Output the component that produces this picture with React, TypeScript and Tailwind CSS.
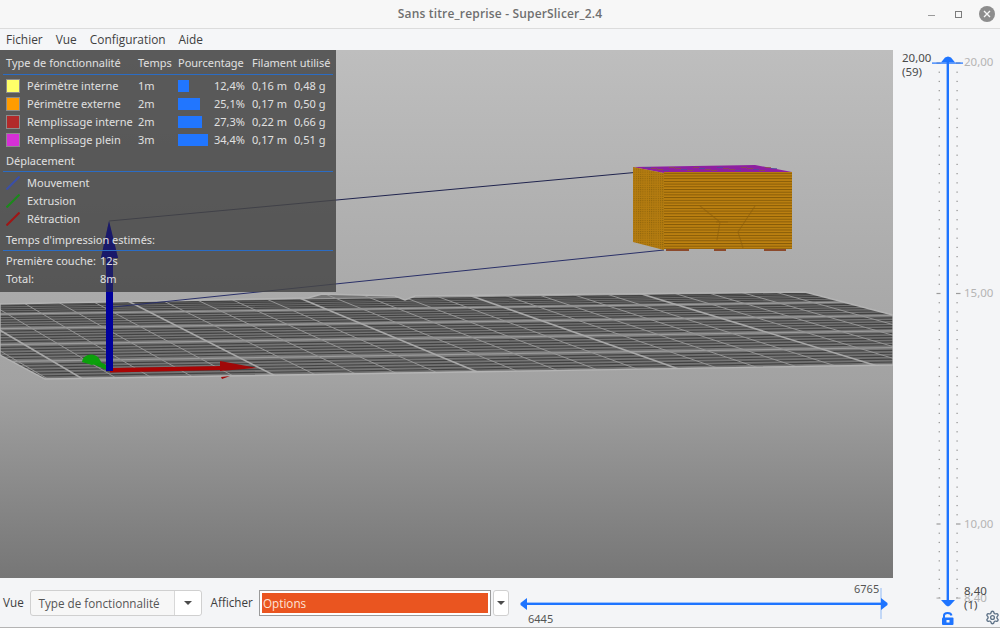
import React from "react";
import { Settings } from "lucide-react";

const features = [
  { color: "bg-[#ffff68]", name: "Périmètre interne", time: "1m", bar: "w-[11px]", pct: "12,4%", len: "0,16 m", weight: "0,48 g" },
  { color: "bg-[#ff9c00]", name: "Périmètre externe", time: "2m", bar: "w-[22px]", pct: "25,1%", len: "0,17 m", weight: "0,50 g" },
  { color: "bg-[#b22a2a]", name: "Remplissage interne", time: "2m", bar: "w-[24px]", pct: "27,3%", len: "0,22 m", weight: "0,66 g" },
  { color: "bg-[#d62fd6]", name: "Remplissage plein", time: "3m", bar: "w-[30px]", pct: "34,4%", len: "0,17 m", weight: "0,51 g" },
];

const moves = [
  { color: "#3a4fa8", name: "Mouvement" },
  { color: "#1a8a1a", name: "Extrusion" },
  { color: "#a01515", name: "Rétraction" },
];

const bedTop = (x: number) => 303 - x * 0.0137;
const bedBottom = (x: number) => 379.7 - x * 0.0165;
const bedOutline = "0,304 308,298 322,294 395,296 405,300 415,296 805,292 893,315 893,365 45,379 0,355";

const BedAndModel = () => {
  const rows = Array.from({ length: 31 }, (_, i) => i);
  const cols = Array.from({ length: 31 }, (_, i) => i);
  const mottles = Array.from({ length: 22 }, (_, i) => i);
  return (
    <svg viewBox="0 50 893 528" className="block w-[893px] h-[528px]">
      <defs>
        <clipPath id="bed">
          <polygon points={bedOutline} />
        </clipPath>
        <pattern id="layers" width="4" height="2.7" patternUnits="userSpaceOnUse">
          <rect width="4" height="2.7" fill="#bd8110" />
          <rect width="4" height="1" fill="#855a08" />
        </pattern>
        <pattern id="side" width="2.2" height="2.2" patternUnits="userSpaceOnUse">
          <rect width="2.2" height="2.2" fill="#b47c10" />
          <rect width="1" height="1" fill="#8e640b" />
        </pattern>
      </defs>

      <g clipPath="url(#bed)">
        <rect x="0" y="285" width="893" height="100" fill="#747474" />
        {rows.map((i) => {
          const v = Math.pow(i / 30, 1.2);
          const y0 = bedTop(0) + (bedBottom(0) - bedTop(0)) * v;
          const y1 = bedTop(893) + (bedBottom(893) - bedTop(893)) * v;
          const major = i % 6 === 0;
          return (
            <line
              key={i}
              x1="0"
              y1={y0}
              x2="893"
              y2={y1}
              stroke={major ? "#9c9c9c" : "#434343"}
              strokeWidth="1.2"
            />
          );
        })}
        {cols.map((i) => {
          const top = -240 + i * 35;
          const dx = 130 + Math.max(top, 0) * 0.19;
          const major = i % 5 === 0;
          return (
            <line
              key={i}
              x1={top}
              y1="292"
              x2={top + dx * 1.15}
              y2="380"
              stroke={major ? "#a8a8a8" : "#949494"}
              strokeWidth={major ? 1.6 : 1}
            />
          );
        })}
      </g>
      <polygon points={bedOutline} fill="none" stroke="#b4b4b4" strokeWidth="1.4" />

      {/* travel moves */}
      <line x1="109" y1="221" x2="640" y2="172" stroke="#20244e" strokeWidth="1" />
      <line x1="113" y1="307" x2="664" y2="250" stroke="#2a3068" strokeWidth="1" />

      {/* printed part */}
      <polygon points="633,167 755,165 792,172 664,173" fill="#8e1fa0" />
      {mottles.map((i) => (
        <line
          key={i}
          x1={645 + i * 6}
          y1={167.5 + (i % 4)}
          x2={651 + i * 6}
          y2={167.5 + (i % 4)}
          stroke={i % 3 === 0 ? "#4a4f9c" : "#8a5440"}
          strokeWidth="1"
          opacity="0.7"
        />
      ))}
      <polygon points="633,167 664,173 664,250 633,242" fill="url(#side)" />
      <rect x="664" y="172" width="128" height="77" fill="url(#layers)" />
      <path d="M700 206 L720 222 L717 240 M755 206 L738 232 L743 248 M716 222 L728 222" stroke="#8a5c0c" strokeWidth="1.2" opacity="0.55" fill="none" />
      <rect x="666" y="249" width="23" height="2" fill="#8c4a2c" />
      <rect x="714" y="249" width="12" height="2" fill="#8c4a2c" />
      <rect x="764" y="249" width="22" height="2" fill="#8c4a2c" />

      {/* axes */}
      <polygon points="109,371 88,362 91,357 110,367" fill="#0c9a0c" />
      <path d="M82 362 C83 353 97 351 101 362 L92 365 Z" fill="#0ca00c" />
      <polygon points="110,368 222,366 222,370 110,372.5" fill="#a80404" />
      <polygon points="220,361 257,368 220,371" fill="#a00808" />
      <polygon points="221,377 230,376 222,379" fill="#a00808" />
      <rect x="106" y="258" width="7" height="113" fill="#00009c" />
      <polygon points="109,221 118,258 101,258" fill="#00009c" />
    </svg>
  );
};

const Legend = () => (
  <div className="absolute left-0 top-0 w-[336px] h-[242px] bg-[rgba(70,70,70,0.84)] px-[3px] text-[11px] leading-[18px] text-[#e0e0e0] font-['Noto_Sans',sans-serif]">
    {/* the blue axis shows through the panel, darker */}
    <svg viewBox="0 50 336 242" className="absolute left-0 top-0 w-[336px] h-[242px]">
      <rect x="106" y="258" width="7" height="34" fill="#14146e" opacity="0.75" />
      <polygon points="109,221 118,258 101,258" fill="#14146e" opacity="0.85" />
    </svg>
    <div className="relative">
      <div className="flex h-[25px] items-end pb-[2px] pl-[3px] border-b border-[#2b6cc4] whitespace-nowrap">
        <span className="w-[132px]">Type de fonctionnalité</span>
        <span className="w-[40px]">Temps</span>
        <span className="w-[74px]">Pourcentage</span>
        <span>Filament utilisé</span>
      </div>
      <div className="flex flex-col pt-[2px]">
        {features.map((f) => (
          <div key={f.name} className="flex h-[18px] items-center pl-[3px]">
            <span className={`${f.color} w-[14px] h-[14px] border border-[#8c8c8c] shrink-0`} />
            <span className="w-[118px] pl-[7px] whitespace-nowrap">{f.name}</span>
            <span className="w-[40px]">{f.time}</span>
            <span className="w-[36px]">
              <span className={`${f.bar} block h-[11.5px] bg-[#2176ff]`} />
            </span>
            <span className="w-[31px] text-right">{f.pct}</span>
            <span className="w-[49px] pl-[7px] whitespace-nowrap">{f.len}</span>
            <span className="whitespace-nowrap">{f.weight}</span>
          </div>
        ))}
      </div>
      <div className="flex h-[23px] items-end pl-[3px] pb-[1px] border-b border-[#2b6cc4]">Déplacement</div>
      <div className="flex flex-col pt-[2px]">
        {moves.map((m) => (
          <div key={m.name} className="flex h-[18px] items-center pl-[3px]">
            <svg width="14" height="14" viewBox="0 0 14 14" className="shrink-0">
              <line x1="0.5" y1="13.5" x2="13.5" y2="0.5" stroke={m.color} strokeWidth="2" />
            </svg>
            <span className="pl-[7px]">{m.name}</span>
          </div>
        ))}
      </div>
      <div className="flex h-[23px] items-end pl-[3px] pb-[1px] border-b border-[#2b6cc4]">Temps d'impression estimés:</div>
      <div className="flex h-[19px] items-end pl-[3px]">
        <span className="w-[94px]">Première couche:</span>
        <span>12s</span>
      </div>
      <div className="flex h-[18px] items-end pl-[3px]">
        <span className="w-[94px]">Total:</span>
        <span>8m</span>
      </div>
    </div>
  </div>
);

const SliderDrawing = () => {
  const ticks = Array.from({ length: 59 }, (_, i) => 63 + i * 9.22);
  return (
    <svg viewBox="893 50 107 578" className="block w-[107px] h-[578px]">
      {ticks.map((y, i) => {
        const major = i % 25 === 0;
        return (
          <g key={i} fill="#9c9c9c">
            <rect x={major ? 936.5 : 938.6} y={y - 0.6} width={major ? 4 : 1.4} height="1.2" />
            <rect x={major ? 956 : 956.4} y={y - 0.6} width={major ? 4.5 : 1.4} height="1.2" />
          </g>
        );
      })}
      <rect x="936.5" y="597.5" width="4" height="1.2" fill="#b5b5b5" />
      <rect x="956" y="597.5" width="4.5" height="1.2" fill="#b5b5b5" />
      <rect x="932" y="62.5" width="31" height="1.2" fill="#1e74ff" />
      <rect x="946.6" y="60" width="2.4" height="544" fill="#1e74ff" />
      <path d="M948 56.5 L951 57.5 L955 62.5 L941 62.5 L945 57.5 Z" fill="#1e74ff" />
      <path d="M941 600 L955 600 L950 605.5 L948 606.5 L946 605.5 Z" fill="#1e74ff" />
      {/* lock */}
      <path d="M944 618 V615.5 C944 612 951 612 951.5 615.5" fill="none" stroke="#1e74ff" strokeWidth="2" />
      <rect x="942" y="617.5" width="11.5" height="7.5" rx="1" fill="#1e74ff" />
      <rect x="946.5" y="620" width="3" height="2.5" fill="#f4f5f7" />
    </svg>
  );
};

const SliderPanel = () => (
  <div className="relative w-[107px] h-[577px] bg-[#f4f5f7] text-[11.5px] leading-[12px] font-['Noto_Sans',sans-serif]">
    <SliderDrawing />
    <span className="absolute left-[9px] top-[2px] text-[#4a4a4a]">20,00</span>
    <span className="absolute left-[9px] top-[16px] text-[#4a4a4a]">(59)</span>
    <span className="absolute left-[71px] top-[6px] text-[#b4b4b4]">20,00</span>
    <span className="absolute left-[71px] top-[237px] text-[#b4b4b4]">15,00</span>
    <span className="absolute left-[71px] top-[468px] text-[#b4b4b4]">10,00</span>
    <span className="absolute left-[71px] top-[542px] text-[#b4b4b4]">8,40</span>
    <span className="absolute left-[71px] top-[535px] text-[#4a4a4a]">8,40</span>
    <span className="absolute left-[71px] top-[549px] text-[#4a4a4a]">(1)</span>
    <Settings className="absolute left-[92px] top-[560px] text-[#5f7388]" size={15} strokeWidth={2.2} />
  </div>
);

const Caret = () => (
  <span className="w-0 h-0 border-x-[4px] border-x-transparent border-t-[4px] border-t-[#4c4c4c]" />
);

const BottomBar = () => (
  <div className="flex h-[49px] items-center bg-[#f4f5f7] pl-[3px] text-[11.7px] text-[#3d3d3d] font-['Open_Sans',sans-serif]">
    <span className="w-[26.5px]">Vue</span>
    <div className="flex w-[172px] h-[26px] rounded-[3px] border border-[#d0d0d0] bg-[#f7f7f7]">
      <span className="flex-1 pl-[8px] leading-[24px] text-[#555]">Type de fonctionnalité</span>
      <span className="flex w-[27px] items-center justify-center border-l border-[#d8d8d8] bg-white rounded-r-[3px]">
        <Caret />
      </span>
    </div>
    <span className="pl-[9px] w-[57.5px]">Afficher</span>
    <div className="w-[232px] h-[26px] border border-[#9a9a9a] p-[2px] bg-white">
      <div className="h-full bg-[#ea5520] pl-[1px] leading-[21px] text-[#fde3d8]">Options</div>
    </div>
    <span className="flex ml-[2px] w-[16px] h-[26px] items-center justify-center rounded-[3px] border border-[#d0d0d0] bg-white">
      <Caret />
    </span>
    <div className="relative ml-[11px] w-[368px] h-[48px] font-['Noto_Sans',sans-serif] text-[11px]">
      <svg viewBox="520 578 368 48" className="block w-[368px] h-[48px]">
        <rect x="880.5" y="587" width="1" height="31" fill="#8fb9f5" />
        <rect x="526" y="601.6" width="357" height="2.4" fill="#1e74ff" />
        <path d="M527 597 L527 609 L520.5 604 L520.5 602 Z" fill="#1e74ff" />
        <path d="M881 597 L881 609 L887.5 604 L887.5 602 Z" fill="#1e74ff" />
      </svg>
      <span className="absolute left-[8px] top-[32px] leading-[16px] text-[#555]">6445</span>
      <span className="absolute left-[334px] top-[2px] leading-[16px] text-[#555]">6765</span>
    </div>
  </div>
);

const App = () => (
  <div className="flex flex-col w-[1000px] h-[628px] overflow-hidden bg-[#f4f5f7] font-['Open_Sans',sans-serif]">
    <header className="flex h-[29px] items-center border-b border-[#dcdcdc] bg-[#f7f7f7] relative">
      <h1 className="flex-1 text-center text-[12px] font-semibold tracking-[0.17px] text-[#6f6f6f]">
        Sans titre_reprise - SuperSlicer_2.4
      </h1>
      <div className="absolute right-[5px] top-[6px] flex items-center gap-[17px]">
        <span className="w-[7px] h-[1px] mt-[3px] mr-[3px] bg-[#9a9a9a]" />
        <span className="w-[7px] h-[7px] border border-[#7c7c7c]" />
        <span className="flex w-[16px] h-[16px] rounded-full bg-[#8d8d8d] items-center justify-center">
          <svg width="8" height="8" viewBox="0 0 8 8">
            <path d="M1 1 L7 7 M7 1 L1 7" stroke="#f7f7f7" strokeWidth="1.4" />
          </svg>
        </span>
      </div>
    </header>
    <nav className="flex h-[21px] items-center gap-[13px] pl-[6px] bg-[#f5f6f8] text-[11.9px] text-[#3f3f3f]">
      <span>Fichier</span>
      <span>Vue</span>
      <span>Configuration</span>
      <span>Aide</span>
    </nav>
    <div className="flex h-[577px]">
      <div className="flex flex-col w-[893px]">
        <div className="relative h-[528px] bg-linear-to-b from-[#bebebe] via-[#a2a2a2] via-[63%] to-[#767676]">
          <BedAndModel />
          <Legend />
        </div>
        <BottomBar />
      </div>
      <SliderPanel />
    </div>
    <div className="relative h-[1px] bg-[#b4b4b4]" />
  </div>
);

export default App;
